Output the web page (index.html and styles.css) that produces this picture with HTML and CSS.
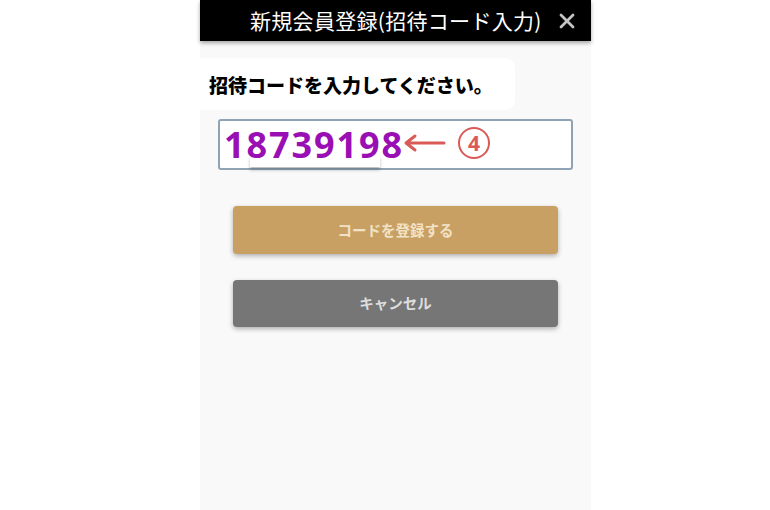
FILE: index.html
```html
<!DOCTYPE html>
<html lang="ja">
<head>
<meta charset="utf-8">
<title>新規会員登録(招待コード入力)</title>
<link rel="stylesheet" href="styles.css">
</head>
<body>
<div class="panel">
  <header class="topbar">
    <h1 class="title">新規会員登録(招待コード入力)</h1>
    <span class="close" aria-label="閉じる">
      <svg width="16" height="16" viewBox="0 0 16 16"><path d="M2 2 L14 14 M14 2 L2 14" stroke="#c4c4c4" stroke-width="2.8" stroke-linecap="round"/></svg>
    </span>
  </header>
  <div class="label-box">
    <p class="label">招待コードを入力してください。</p>
  </div>
  <div class="input-row">
    <div class="code-input">
      <span class="code">18739198</span>
      <svg class="arrow" width="44" height="20" viewBox="0 0 44 20"><path d="M42 10 H5 M13 3 L4 10 L13 17" fill="none" stroke="#d95a57" stroke-width="3" stroke-linecap="round" stroke-linejoin="round"/></svg>
      <span class="step">4</span>
      <div class="suggest"></div>
    </div>
  </div>
  <div class="buttons">
    <button class="btn btn-gold">コードを登録する</button>
    <button class="btn btn-gray">キャンセル</button>
  </div>
</div>
</body>
</html>
```
FILE: styles.css
```css
html, body {
  margin: 0;
  padding: 0;
  background: #ffffff;
}
body {
  width: 770px;
  height: 510px;
  overflow: hidden;
  font-family: "Noto Sans CJK JP", "Noto Sans", sans-serif;
}
.panel {
  margin-left: 200px;
  width: 391px;
  height: 510px;
  background: #f9f9f9;
  display: flex;
  flex-direction: column;
}
.topbar {
  height: 41px;
  background: #000;
  display: flex;
  align-items: center;
  padding-left: 50px;
  box-shadow: 0 2px 4px rgba(0,0,0,0.35);
  position: relative;
  z-index: 1;
}
.title {
  margin: 0;
  font-size: 21px;
  font-weight: 400;
  color: #fff;
  letter-spacing: 0.3px;
  line-height: 1;
}
.close {
  margin-left: 17px;
  display: flex;
  align-items: center;
}
.label-box {
  margin-top: 17px;
  width: 315px;
  height: 52px;
  background: #fff;
  border-radius: 0 10px 10px 0;
  display: flex;
  align-items: center;
}
.label {
  margin: 0 0 0 9px;
  font-size: 19px;
  font-weight: 900;
  color: #000;
  line-height: 1;
}
.input-row {
  margin-top: 9px;
  padding-left: 18px;
}
.code-input {
  position: relative;
  box-sizing: border-box;
  width: 355px;
  height: 51px;
  border: 2px solid #8fa3b4;
  border-radius: 3px;
  background: #fff;
  display: flex;
  align-items: center;
  padding-left: 4px;
}
.code {
  font-family: "Noto Sans", sans-serif;
  font-weight: 700;
  font-size: 36px;
  letter-spacing: 1.9px;
  color: #990fb3;
  line-height: 1;
  position: relative;
  z-index: 2;
  margin-top: 1px;
}
.arrow {
  margin-left: -2px;
  margin-top: -3px;
  position: relative;
  z-index: 2;
}
.step {
  box-sizing: border-box;
  margin-left: 12px;
  margin-top: -3px;
  width: 32px;
  height: 32px;
  border: 2.5px solid #d95a57;
  border-radius: 50%;
  color: #d95a57;
  font-family: "Noto Sans", sans-serif;
  font-weight: 700;
  font-size: 21px;
  line-height: 1;
  display: flex;
  align-items: center;
  justify-content: center;
}
.suggest {
  position: absolute;
  left: 30px;
  top: 34px;
  width: 130px;
  height: 12px;
  background: #fff;
  box-shadow: 0 3px 3px rgba(60,70,80,0.35);
  z-index: 1;
}
.buttons {
  padding-left: 33px;
  margin-top: 36px;
  display: flex;
  flex-direction: column;
  gap: 26px;
}
.btn {
  width: 325px;
  border: none;
  border-radius: 4px;
  font-family: "Noto Sans CJK JP", sans-serif;
  font-weight: 700;
  font-size: 14.5px;
  line-height: 1;
  padding: 0;
  box-shadow: 0 2px 5px rgba(0,0,0,0.3);
}
.btn-gold {
  height: 48px;
  background: #c9a063;
  color: #f1e2c6;
}
.btn-gray {
  height: 47px;
  background: #767676;
  color: #dddddd;
}
```
